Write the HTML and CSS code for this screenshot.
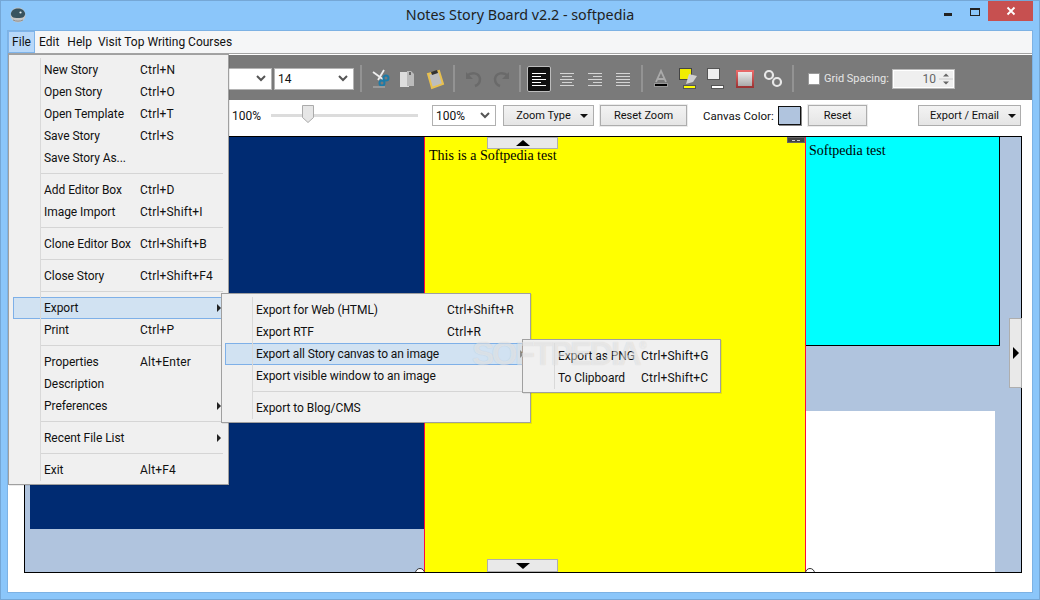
FILE: index.html
```html
<!DOCTYPE html>
<html lang="en">
<head>
<meta charset="utf-8">
<title>Notes Story Board v2.2 - softpedia</title>
<link rel="stylesheet" href="styles.css">
</head>
<body>
<div class="window">
  <header class="titlebar">
    <div class="title-left">
      <svg class="app-icon" width="16" height="16" viewBox="0 0 16 16"><circle cx="8" cy="8" r="7.5" fill="#c4c4c4"/><path d="M.8 7C1.500 3 4.500 1.500 8 1.500S14.500 3 15.200 7c-.5 2.500-2 3.500-3.700 3.800-2.500.4-4.500.4-7 0C2.800 10.500 1.300 9.500.8 7z" fill="#38535f"/><path d="M3 13c3 1.500 7 1.500 10 0" fill="none" stroke="#8f8f8f"/><circle cx="10.500" cy="5.500" r="1.100" fill="#e4edf2"/></svg>
    </div>
    <div class="title-text">Notes Story Board v2.2 - softpedia</div>
    <div class="controls">
      <span class="ctl-min"></span>
      <span class="ctl-max"></span>
      <span class="ctl-close"><svg width="10" height="10" viewBox="0 0 10 10"><path d="M1.500 1.500l7 7M8.500 1.500l-7 7" stroke="#fff" stroke-width="1.800"/></svg></span>
    </div>
  </header>

  <div class="client">
    <nav class="menubar">
      <span class="mb-item mb-file">File</span>
      <span class="mb-item mb-edit">Edit</span>
      <span class="mb-item mb-help">Help</span>
      <span class="mb-item mb-visit">Visit Top Writing Courses</span>
    </nav>

    <div class="toolbar">
      <div class="tb-select tb-font"><svg class="chev" width="10" height="7" viewBox="0 0 10 7"><path d="M1 1l4 4 4-4" fill="none" stroke="#555" stroke-width="2"/></svg></div>
      <div class="tb-select tb-size"><span>14</span><svg class="chev" width="10" height="7" viewBox="0 0 10 7"><path d="M1 1l4 4 4-4" fill="none" stroke="#555" stroke-width="2"/></svg></div>
      <span class="sep ml6"></span>
      <span class="tool ml7"><svg width="24" height="24" viewBox="0 0 24 24"><path d="M4 5l11 8M15 3l-6 10" stroke="#eee" stroke-width="1.800" fill="none"/><circle cx="17" cy="11" r="2.500" fill="none" stroke="#1c7ba8" stroke-width="2"/><circle cx="13" cy="16" r="2.500" fill="none" stroke="#1c7ba8" stroke-width="2"/><path d="M4 20h12" stroke="#999" stroke-width="2"/></svg></span>
      <span class="tool ml2"><svg width="24" height="24" viewBox="0 0 24 24"><path d="M5 5h9v15H5z" fill="#ddd"/><path d="M12 4h4l3 3v12h-7z" fill="#bbb"/><path d="M14 5h2v3h-2z" fill="#666"/></svg></span>
      <span class="tool ml4"><svg width="24" height="24" viewBox="0 0 24 24"><path d="M5 7l11-3 4 13-11 4z" fill="#bdbdbd" stroke="#e8c04e" stroke-width="2"/><path d="M8 5l6-2 1 3-6 2z" fill="#333"/></svg></span>
      <span class="sep ml6"></span>
      <span class="tool ml6"><svg width="24" height="24" viewBox="0 0 24 24"><path d="M6 9c4-4 12-4 13 3 0 3-2 6-5 7" fill="none" stroke="#6a6a6a" stroke-width="2.500"/><path d="M5 5v7h7z" fill="#6a6a6a"/></svg></span>
      <span class="tool ml5"><svg width="24" height="24" viewBox="0 0 24 24"><path d="M18 9C14 5 6 5 5 12c0 3 2 6 5 7" fill="none" stroke="#6a6a6a" stroke-width="2.500"/><path d="M19 5v7h-7z" fill="#6a6a6a"/></svg></span>
      <span class="sep ml5"></span>
      <span class="tool tool-active ml6"><svg width="16" height="16" viewBox="0 0 16 16"><path d="M1 2.500h14M1 5.500h9M1 8.500h14M1 11.500h9M1 14.500h14" stroke="#fff" stroke-width="1"/></svg></span>
      <span class="tool ml4"><svg width="16" height="16" viewBox="0 0 16 16"><path d="M1 2.500h14M3 5.500h10M1 8.500h14M3 11.500h10M1 14.500h14" stroke="#d4d4d4" stroke-width="1"/></svg></span>
      <span class="tool ml4"><svg width="16" height="16" viewBox="0 0 16 16"><path d="M1 2.500h14M6 5.500h9M1 8.500h14M6 11.500h9M1 14.500h14" stroke="#d4d4d4" stroke-width="1"/></svg></span>
      <span class="tool ml4"><svg width="16" height="16" viewBox="0 0 16 16"><path d="M1 2.500h14M1 5.500h14M1 8.500h14M1 11.500h14M1 14.500h14" stroke="#d4d4d4" stroke-width="1"/></svg></span>
      <span class="sep ml6"></span>
      <span class="tool ml6"><svg width="24" height="24" viewBox="0 0 24 24"><path d="M7 15L12 4l5 11M9 12h6" fill="none" stroke="#aaa" stroke-width="1.800"/><rect x="5.500" y="16.500" width="13" height="3" fill="#000" stroke="#999"/></svg></span>
      <span class="tool ml2"><svg width="24" height="24" viewBox="0 0 24 24"><rect x="4.500" y="1.500" width="12" height="11" fill="#f0ec00" stroke="#444"/><path d="M11 17l3-10 8 2-4 6z" fill="#cfcfcf"/><rect x="8.500" y="18.500" width="12" height="3" fill="#ff0" stroke="#555"/></svg></span>
      <span class="tool ml4"><svg width="24" height="24" viewBox="0 0 24 24"><rect x="4.500" y="1.500" width="12" height="11" fill="#efefef" stroke="#555"/><rect x="8.500" y="18.500" width="12" height="3" fill="#fff" stroke="#555"/></svg></span>
      <span class="tool ml6"><svg width="24" height="24" viewBox="0 0 24 24"><defs><linearGradient id="bx" x1="0" y1="0" x2="0" y2="1"><stop offset="0" stop-color="#f0f0f0"/><stop offset="1" stop-color="#a5a5a5"/></linearGradient><linearGradient id="bs" x1="0" y1="0" x2="0" y2="1"><stop offset="0" stop-color="#e86a6a"/><stop offset="1" stop-color="#9c3434"/></linearGradient></defs><rect x="4" y="4" width="16" height="16" fill="url(#bx)" stroke="url(#bs)" stroke-width="2"/></svg></span>
      <span class="tool ml4"><svg width="24" height="24" viewBox="0 0 24 24"><circle cx="8" cy="8" r="4" fill="none" stroke="#e8e8e8" stroke-width="2.200"/><circle cx="16" cy="15" r="4" fill="none" stroke="#e8e8e8" stroke-width="2.200"/></svg></span>
      <span class="sep ml7"></span>
      <span class="check"></span>
      <span class="grid-label">Grid Spacing:</span>
      <div class="spinner">
        <span class="spin-value">10</span>
        <span class="spin-btns"><svg width="14" height="16" viewBox="0 0 14 16"><path d="M4 5.500l3-3 3 3z" fill="#666"/><path d="M0 8h14" stroke="#ccc"/><path d="M4 10.500l3 3 3-3z" fill="#666"/></svg></span>
      </div>
    </div>

    <div class="zoombar">
      <span class="zoom-pct">100%</span>
      <div class="slider">
        <svg class="thumb" width="12" height="19" viewBox="0 0 12 19"><path d="M.5.500h11v12l-5.500 5-5.500-5z" fill="#e6e6e6" stroke="#ababab"/></svg>
      </div>
      <div class="zoom-select"><span>100%</span><svg class="chev" width="10" height="7" viewBox="0 0 10 7"><path d="M1 1l4 4 4-4" fill="none" stroke="#555" stroke-width="2"/></svg></div>
      <div class="btn btn-caret btn-zoomtype">Zoom Type<span class="caret"></span></div>
      <div class="btn btn-focus btn-resetzoom">Reset Zoom</div>
      <span class="canvas-label">Canvas Color:</span>
      <span class="swatch"></span>
      <div class="btn btn-focus btn-reset">Reset</div>
      <div class="btn btn-caret btn-export">Export / Email<span class="caret"></span></div>
    </div>

    <main class="canvas">
      <div class="box box-navy"></div>
      <div class="box box-yellow">This is a Softpedia test</div>
      <div class="box box-cyan">Softpedia test</div>
      <div class="box box-white"></div>
      <span class="corner"></span>
      <span class="knob knob-a"></span>
      <span class="knob knob-b"></span>
      <div class="handle handle-top"><span class="tri-up"></span></div>
      <div class="handle handle-bottom"><span class="tri-down"></span></div>
      <div class="handle handle-right"><span class="tri-right"></span></div>
    </main>
  </div>

  <div class="menu menu-file">
    <div class="item"><span class="lbl">New Story</span><span class="key">Ctrl+N</span></div>
    <div class="item"><span class="lbl">Open Story</span><span class="key">Ctrl+O</span></div>
    <div class="item"><span class="lbl">Open Template</span><span class="key">Ctrl+T</span></div>
    <div class="item"><span class="lbl">Save Story</span><span class="key">Ctrl+S</span></div>
    <div class="item"><span class="lbl">Save Story As...</span></div>
    <div class="rule"></div>
    <div class="item"><span class="lbl">Add Editor Box</span><span class="key">Ctrl+D</span></div>
    <div class="item"><span class="lbl">Image Import</span><span class="key">Ctrl+Shift+I</span></div>
    <div class="rule"></div>
    <div class="item"><span class="lbl">Clone Editor Box</span><span class="key">Ctrl+Shift+B</span></div>
    <div class="rule"></div>
    <div class="item"><span class="lbl">Close Story</span><span class="key">Ctrl+Shift+F4</span></div>
    <div class="rule"></div>
    <div class="item item-on"><span class="lbl">Export</span><span class="arrow"></span></div>
    <div class="item"><span class="lbl">Print</span><span class="key">Ctrl+P</span></div>
    <div class="rule"></div>
    <div class="item"><span class="lbl">Properties</span><span class="key">Alt+Enter</span></div>
    <div class="item"><span class="lbl">Description</span></div>
    <div class="item"><span class="lbl">Preferences</span><span class="arrow"></span></div>
    <div class="rule"></div>
    <div class="item"><span class="lbl">Recent File List</span><span class="arrow"></span></div>
    <div class="rule"></div>
    <div class="item"><span class="lbl">Exit</span><span class="key">Alt+F4</span></div>
  </div>

  <div class="menu menu-export">
    <div class="item"><span class="lbl">Export for Web (HTML)</span><span class="key">Ctrl+Shift+R</span></div>
    <div class="item"><span class="lbl">Export RTF</span><span class="key">Ctrl+R</span></div>
    <div class="item item-on"><span class="lbl">Export all Story canvas to an image</span><span class="arrow"></span></div>
    <div class="item"><span class="lbl">Export visible window to an image</span></div>
    <div class="rule"></div>
    <div class="item"><span class="lbl">Export to Blog/CMS</span></div>
  </div>

  <div class="menu menu-image">
    <div class="item"><span class="lbl">Export as PNG</span><span class="key">Ctrl+Shift+G</span></div>
    <div class="item"><span class="lbl">To Clipboard</span><span class="key">Ctrl+Shift+C</span></div>
  </div>

  <div class="watermark">SOFTPEDIA<sup class="reg">®</sup></div>
</div>
</body>
</html>
```

FILE: styles.css
```css
* { box-sizing: border-box; }
html, body { margin: 0; padding: 0; }
body {
  width: 1040px;
  height: 600px;
  overflow: hidden;
  font-family: Roboto, "Noto Sans", sans-serif;
  font-size: 12px;
  color: #111;
}
.window {
  position: relative;
  width: 1040px;
  height: 600px;
  display: flex;
  flex-direction: column;
  background: #8bc6fa;
  border: 1px solid #75a7d6;
  padding: 0 7px 7px;
}

/* title bar */
.titlebar {
  height: 30px;
  margin: 0 -7px;
  display: grid;
  grid-template-columns: 1fr auto 1fr;
  align-items: start;
}
.title-left { padding: 6px 0 0 9px; }
.app-icon { display: block; }
.title-text {
  font-family: "Noto Sans", sans-serif;
  font-size: 14.300px;
  line-height: 28px;
  color: #222;
}
.controls {
  display: flex;
  justify-content: flex-end;
  padding-right: 6px;
}
.ctl-min {
  width: 8px;
  height: 3px;
  margin: 12px 0 0 0;
  background: #222;
}
.ctl-max {
  width: 10px;
  height: 8px;
  margin: 7px 0 0 18px;
  border: 1px solid #222;
  border-top-width: 2px;
}
.ctl-close {
  width: 45px;
  height: 20px;
  margin-left: 8px;
  background: #c75050;
  display: flex;
  align-items: center;
  justify-content: center;
}

/* client area */
.client {
  flex: 1;
  display: flex;
  flex-direction: column;
  background: #fff;
  box-shadow: 0 0 0 1px #7db2e4;
}
.menubar {
  height: 22px;
  display: flex;
  align-items: stretch;
  background: #f5f6f7;
}
.mb-item {
  display: flex;
  align-items: center;
  white-space: nowrap;
}
.mb-file {
  width: 27px;
  justify-content: center;
  background: #b8d8f9;
  border: 1px solid #7fb4ea;
}
.mb-edit { margin-left: 4px; }
.mb-help { margin-left: 8px; }
.mb-visit { margin-left: 6px; }

.toolbar {
  height: 47px;
  border-top: 1px solid #a3a3a3;
  box-shadow: inset 0 1px 0 #fff;
  padding-top: 3px;
  display: flex;
  align-items: center;
  background: #7a7a7a;
  color: #e6e6e6;
}
.tb-select {
  height: 22px;
  background: #fff;
  border: 1px solid #b4b4b4;
  display: flex;
  align-items: center;
  justify-content: space-between;
  padding: 0 5px 0 3px;
  color: #111;
}
.tb-font { width: 172px; margin: 0 2px 0 92px; justify-content: flex-end; }
.tb-size { width: 80px; }
.chev { flex: none; }
.sep {
  width: 2px;
  height: 27px;
  background: #939393;
}
.ml2 { margin-left: 2px; }
.ml4 { margin-left: 4px; }
.ml5 { margin-left: 5px; }
.ml6 { margin-left: 6px; }
.ml7 { margin-left: 7px; }
.tool {
  width: 24px;
  height: 26px;
  display: flex;
  align-items: center;
  justify-content: center;
}
.tool-active {
  background: #111;
  border: 1px solid #bdbdbd;
  border-radius: 2px;
}
.check {
  width: 12px;
  height: 12px;
  margin-left: 14px;
  background: #fff;
  border: 1px solid #999;
}
.grid-label {
  width: 62px;
  margin-left: 4px;
  font-size: 11px;
  white-space: nowrap;
}
.spinner {
  width: 63px;
  height: 20px;
  margin-left: 6px;
  display: flex;
  align-items: center;
  background: #efefef;
  border: 1px solid #b9b9b9;
  box-shadow: inset 0 0 0 1px #fff;
}
.spin-value {
  flex: 1;
  text-align: right;
  padding-right: 3px;
  color: #666;
}
.spin-btns {
  width: 15px;
  height: 16px;
  display: flex;
}

.zoombar {
  height: 36px;
  padding: 0 0 5px 224px;
  display: flex;
  align-items: center;
  background: #fff;
}
.zoom-pct { width: 39px; }
.slider {
  position: relative;
  width: 147px;
  height: 3px;
  background: #dcdcdc;
}
.thumb {
  position: absolute;
  left: 31px;
  top: -9px;
}
.zoom-select {
  width: 64px;
  height: 21px;
  margin-left: 14px;
  padding: 0 5px 0 3px;
  display: flex;
  align-items: center;
  justify-content: space-between;
  border: 1px solid #b0b0b0;
}
.btn {
  height: 21px;
  display: flex;
  align-items: center;
  justify-content: center;
  font-size: 11px;
  white-space: nowrap;
  background: linear-gradient(#f3f3f3, #e5e5e5);
  border: 1px solid #adadad;
}
.btn-caret { padding-left: 7px; }
.btn-focus { box-shadow: 0 0 0 1px #ececec; }
.btn-zoomtype { width: 91px; margin-left: 7px; }
.btn-resetzoom { width: 87px; margin-left: 6px; }
.canvas-label { width: 75px; margin-left: 16px; font-size: 11.500px; white-space: nowrap; }
.swatch {
  width: 23px;
  height: 19px;
  background: #b0c4de;
  border: 1px solid #111;
  box-shadow: 1px 1px 0 #888;
}
.btn-reset { width: 59px; margin-left: 7px; }
.btn-export { width: 103px; margin-left: 51px; }
.caret {
  width: 0;
  height: 0;
  margin-left: 9px;
  border-left: 4px solid transparent;
  border-right: 4px solid transparent;
  border-top: 4px solid #111;
}

/* free canvas */
.canvas {
  position: relative;
  flex: 1;
  margin: 0 10px 19px 16px;
  border: 1px solid #000;
  background: #b0c4de;
  font-family: "Liberation Serif", serif;
  font-size: 14px;
  line-height: 16px;
  color: #000;
}
.box { position: absolute; }
.box-navy { left: 5px; top: 0; width: 394px; height: 392px; background: #002b72; }
.box-yellow {
  left: 399px;
  top: 0;
  width: 382px;
  height: 435px;
  padding: 11px 0 0 4px;
  background: #ff0;
  border-left: 1px solid #ff0a3c;
  border-right: 1px solid #ff0a3c;
}
.box-cyan {
  left: 781px;
  top: 0;
  width: 194px;
  height: 209px;
  padding: 6px 0 0 3px;
  background: #0ff;
  border-right: 1px solid #000;
  border-bottom: 1px solid #000;
}
.box-white { left: 781px; top: 274px; width: 189px; height: 161px; background: #fff; }
.corner {
  position: absolute;
  left: 762px;
  top: 0;
  width: 18px;
  height: 6px;
  background: linear-gradient(90deg, #444 0 4px, #ccc 4px 7px, #444 7px 9px, #ccc 9px 12px, #444 12px) center / 100% 1px no-repeat #444;
  border: 1px solid #666;
}
.knob {
  position: absolute;
  top: 431px;
  width: 10px;
  height: 10px;
  border: 1px solid #333;
  border-radius: 50%;
  background: #fff;
  clip-path: inset(0 0 6px 0);
}
.knob-a { left: 390px; }
.knob-b { left: 780px; }
.handle {
  position: absolute;
  display: flex;
  align-items: center;
  justify-content: center;
  background: #e9e9e9;
  border: 1px solid #aeaeae;
}
.handle-top { left: 462px; top: 0; width: 71px; height: 12px; }
.handle-bottom { left: 462px; top: 422px; width: 71px; height: 13px; }
.handle-right { left: 984px; top: 181px; width: 13px; height: 70px; }
.tri-up {
  width: 0; height: 0;
  border-left: 7px solid transparent;
  border-right: 7px solid transparent;
  border-bottom: 6px solid #000;
}
.tri-down {
  width: 0; height: 0;
  border-left: 7px solid transparent;
  border-right: 7px solid transparent;
  border-top: 6px solid #000;
}
.tri-right {
  width: 0; height: 0;
  border-top: 6px solid transparent;
  border-bottom: 6px solid transparent;
  border-left: 6px solid #000;
}

/* menus */
.menu {
  position: absolute;
  background: #f0f0f0;
  border: 1px solid #a0a0a0;
  box-shadow: 1px 1px 0 rgba(0,0,0,.08);
}
.menu::before {
  content: "";
  position: absolute;
  top: 3px;
  bottom: 3px;
  width: 1px;
  background: #d9d9d9;
}
.menu-file { left: 7px; top: 53px; width: 221px; height: 431px; padding: 4px; }
.menu-file::before { left: 31px; }
.menu-file .lbl { width: 96px; }
.menu-export { left: 220px; top: 292px; width: 310px; height: 130px; padding: 5px 3px 3px; }
.menu-export::before { left: 30px; }
.menu-export .lbl { width: 191px; }
.menu-image { left: 521px; top: 338px; width: 199px; height: 54px; padding: 5px 3px 3px; }
.menu-image::before { left: 31px; }
.menu-image .lbl { width: 83px; }
.menu-image .item { padding-left: 31px; }
.item {
  height: 22px;
  display: flex;
  align-items: center;
  padding: 0 0 1px 30px;
  border: 1px solid transparent;
  white-space: nowrap;
}
.item-on {
  background: #d1e2f2;
  border-color: #7eb0e8;
}
.lbl { flex: none; white-space: nowrap; letter-spacing: -.05px; }
.menu-export .item-on .lbl { letter-spacing: -.12px; }
.key { letter-spacing: .2px; }
.arrow {
  width: 0;
  height: 0;
  margin-left: auto;
  margin-right: 2px;
  border-top: 4px solid transparent;
  border-bottom: 4px solid transparent;
  border-left: 4px solid #222;
}
.rule {
  height: 1px;
  margin: 4px 1px 5px 28px;
  background: #d5d5d5;
}
.menu-export .rule { margin-left: 27px; }

.watermark {
  position: absolute;
  left: 471px;
  top: 333px;
  font-family: "Liberation Sans", sans-serif;
  font-size: 33px;
  font-weight: 700;
  line-height: 40px;
  letter-spacing: -2.400px;
  color: rgba(255,255,255,.5);
  text-shadow: 0 0 1px rgba(0,0,0,.15);
  white-space: nowrap;
  pointer-events: none;
}
.reg { font-size: 10px; font-weight: 400; letter-spacing: 0; vertical-align: 16px; line-height: 0; }
```
